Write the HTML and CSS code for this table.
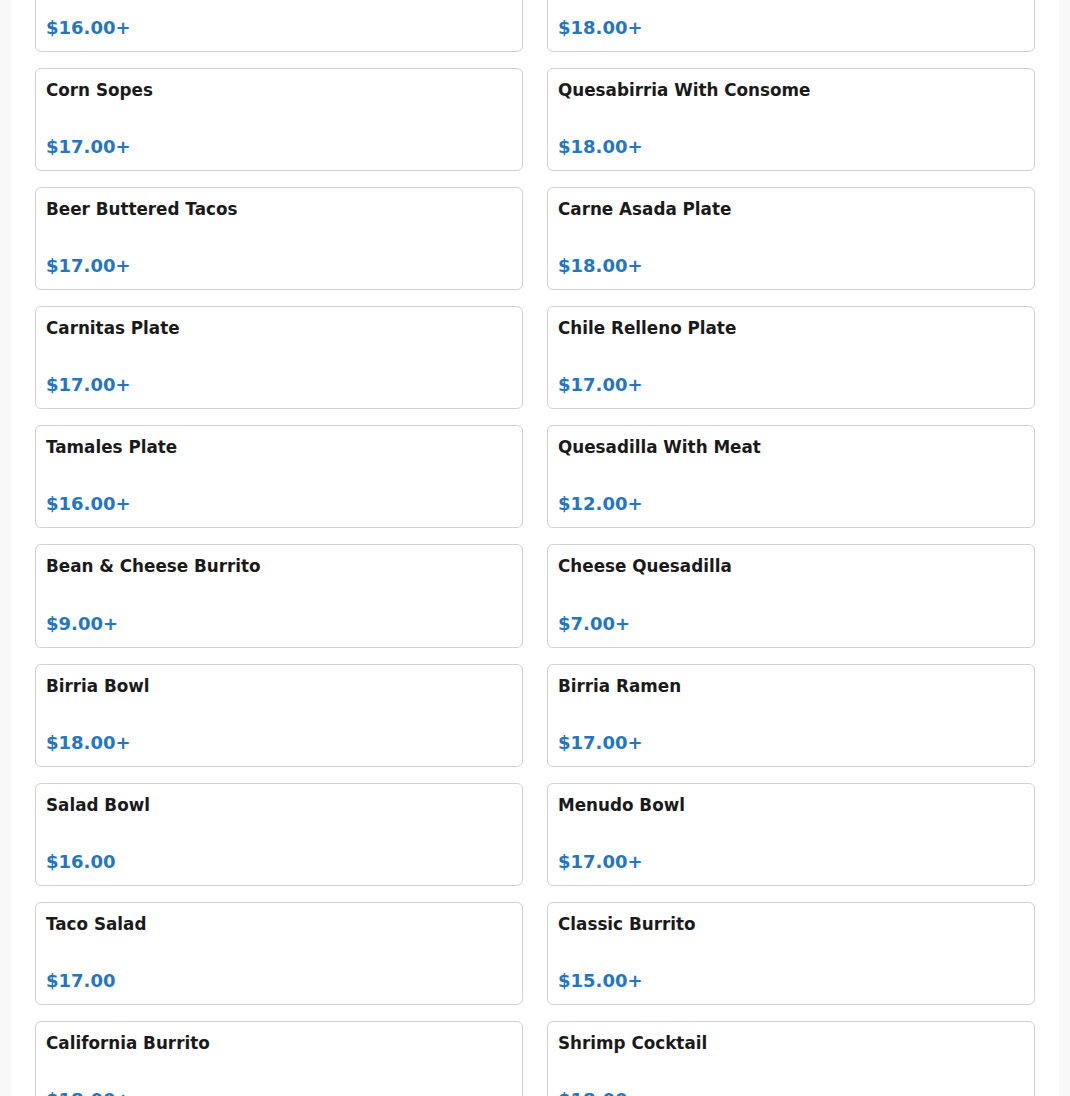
FILE: index.html
```html
<!DOCTYPE html>
<html>
<head>
<meta charset="utf-8">
<link rel="stylesheet" href="styles.css">
</head>
<body>
<div class="page">
  <div class="grid">
    <div class="card"><div class="name">Birria Tacos</div><div class="price">$16.00+</div></div>
    <div class="card"><div class="name">Quesabirria</div><div class="price">$18.00+</div></div>
    <div class="card"><div class="name">Corn Sopes</div><div class="price">$17.00+</div></div>
    <div class="card"><div class="name">Quesabirria With Consome</div><div class="price">$18.00+</div></div>
    <div class="card"><div class="name">Beer Buttered Tacos</div><div class="price">$17.00+</div></div>
    <div class="card"><div class="name">Carne Asada Plate</div><div class="price">$18.00+</div></div>
    <div class="card"><div class="name">Carnitas Plate</div><div class="price">$17.00+</div></div>
    <div class="card"><div class="name">Chile Relleno Plate</div><div class="price">$17.00+</div></div>
    <div class="card"><div class="name">Tamales Plate</div><div class="price">$16.00+</div></div>
    <div class="card"><div class="name">Quesadilla With Meat</div><div class="price">$12.00+</div></div>
    <div class="card"><div class="name">Bean &amp; Cheese Burrito</div><div class="price">$9.00+</div></div>
    <div class="card"><div class="name">Cheese Quesadilla</div><div class="price">$7.00+</div></div>
    <div class="card"><div class="name">Birria Bowl</div><div class="price">$18.00+</div></div>
    <div class="card"><div class="name">Birria Ramen</div><div class="price">$17.00+</div></div>
    <div class="card"><div class="name">Salad Bowl</div><div class="price">$16.00</div></div>
    <div class="card"><div class="name">Menudo Bowl</div><div class="price">$17.00+</div></div>
    <div class="card"><div class="name">Taco Salad</div><div class="price">$17.00</div></div>
    <div class="card"><div class="name">Classic Burrito</div><div class="price">$15.00+</div></div>
    <div class="card"><div class="name">California Burrito</div><div class="price">$18.00+</div></div>
    <div class="card"><div class="name">Shrimp Cocktail</div><div class="price">$18.00</div></div>
  </div>
</div>
</body>
</html>
```

FILE: styles.css
```css
html, body {
  margin: 0;
  padding: 0;
  background: #f8f8f8;
  font-family: "DejaVu Sans", sans-serif;
  overflow: hidden;
}
.page {
  max-width: 1000px;
  margin: 0 auto;
  padding: 0 24px 24px;
  background: #ffffff;
  min-height: 1096px;
}
.grid {
  display: grid;
  grid-template-columns: 1fr 1fr;
  gap: 16px 24px;
  margin-top: -51px;
}
.card {
  border: 1px solid #d0d0d0;
  border-radius: 6px;
  padding: 10px;
  display: flex;
  flex-direction: column;
  gap: 32.1px;
  background: #fff;
}
.name {
  font-size: 16.8px;
  font-weight: bold;
  line-height: 22px;
  color: #1a1a1a;
}
.price {
  font-size: 18px;
  font-weight: bold;
  line-height: 27px;
  color: #2476c0;
}
```
